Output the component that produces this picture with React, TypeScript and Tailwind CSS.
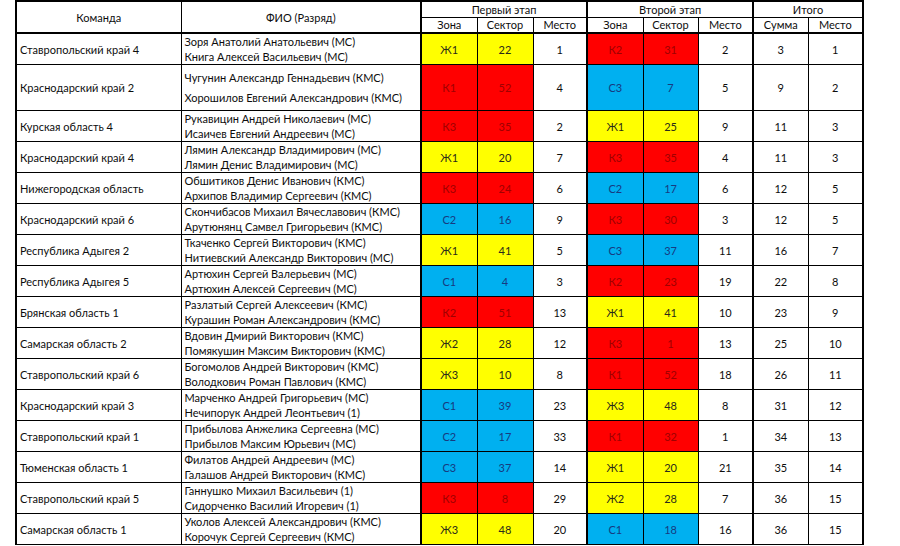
import React from "react";

type Row = {
  team: string;
  n1: string;
  n2: string;
  z1: string;
  s1: string;
  p1: string;
  z2: string;
  s2: string;
  p2: string;
  sum: string;
  place: string;
  tall?: boolean;
};

const rows: Row[] = [
  { team: "Ставропольский край 4", n1: "Зоря Анатолий Анатольевич (МС)", n2: "Книга Алексей Васильевич (МС)", z1: "Ж1", s1: "22", p1: "1", z2: "К2", s2: "31", p2: "2", sum: "3", place: "1" },
  { team: "Краснодарский край 2", n1: "Чугунин Александр Геннадьевич (КМС)", n2: "Хорошилов Евгений Александрович (КМС)", z1: "К1", s1: "52", p1: "4", z2: "С3", s2: "7", p2: "5", sum: "9", place: "2", tall: true },
  { team: "Курская область 4", n1: "Рукавицин Андрей Николаевич (МС)", n2: "Исаичев Евгений Андреевич (МС)", z1: "К3", s1: "35", p1: "2", z2: "Ж1", s2: "25", p2: "9", sum: "11", place: "3" },
  { team: "Краснодарский край 4", n1: "Лямин Александр Владимирович (МС)", n2: "Лямин Денис Владимирович (МС)", z1: "Ж1", s1: "20", p1: "7", z2: "К3", s2: "35", p2: "4", sum: "11", place: "3" },
  { team: "Нижегородская область", n1: "Обшитиков Денис Иванович (КМС)", n2: "Архипов Владимир Сергеевич (КМС)", z1: "К3", s1: "24", p1: "6", z2: "С2", s2: "17", p2: "6", sum: "12", place: "5" },
  { team: "Краснодарский край 6", n1: "Скончибасов Михаил Вячеславович (КМС)", n2: "Арутюнянц Самвел Григорьевич (КМС)", z1: "С2", s1: "16", p1: "9", z2: "К3", s2: "30", p2: "3", sum: "12", place: "5" },
  { team: "Республика Адыгея 2", n1: "Ткаченко Сергей Викторович (КМС)", n2: "Нитиевский Александр Викторович (МС)", z1: "Ж1", s1: "41", p1: "5", z2: "С3", s2: "37", p2: "11", sum: "16", place: "7" },
  { team: "Республика Адыгея 5", n1: "Артюхин Сергей Валерьевич (МС)", n2: "Артюхин Алексей Сергеевич (МС)", z1: "С1", s1: "4", p1: "3", z2: "К2", s2: "23", p2: "19", sum: "22", place: "8" },
  { team: "Брянская область 1", n1: "Разлатый Сергей Алексеевич (КМС)", n2: "Курашин Роман Александрович (КМС)", z1: "К2", s1: "51", p1: "13", z2: "Ж1", s2: "41", p2: "10", sum: "23", place: "9" },
  { team: "Самарская область 2", n1: "Вдовин Дмирий Викторович (КМС)", n2: "Помякушин Максим Викторович (КМС)", z1: "Ж2", s1: "28", p1: "12", z2: "К3", s2: "1", p2: "13", sum: "25", place: "10" },
  { team: "Ставропольский край 6", n1: "Богомолов Андрей Викторович (КМС)", n2: "Володкович Роман Павлович (КМС)", z1: "Ж3", s1: "10", p1: "8", z2: "К1", s2: "52", p2: "18", sum: "26", place: "11" },
  { team: "Краснодарский край 3", n1: "Марченко Андрей Григорьевич (МС)", n2: "Нечипорук Андрей Леонтьевич (1)", z1: "С1", s1: "39", p1: "23", z2: "Ж3", s2: "48", p2: "8", sum: "31", place: "12" },
  { team: "Ставропольский край 1", n1: "Прибылова Анжелика Сергеевна (МС)", n2: "Прибылов Максим Юрьевич (МС)", z1: "С2", s1: "17", p1: "33", z2: "К1", s2: "32", p2: "1", sum: "34", place: "13" },
  { team: "Тюменская область 1", n1: "Филатов Андрей Андреевич (МС)", n2: "Галашов Андрей Викторович (КМС)", z1: "С3", s1: "37", p1: "14", z2: "Ж1", s2: "20", p2: "21", sum: "35", place: "14" },
  { team: "Ставропольский край 5", n1: "Ганнушко Михаил Васильевич (1)", n2: "Сидорченко Василий Игоревич (1)", z1: "К3", s1: "8", p1: "29", z2: "Ж2", s2: "28", p2: "7", sum: "36", place: "15" },
  { team: "Самарская область 1", n1: "Уколов Алексей Александрович (КМС)", n2: "Корочук Сергей Сергеевич (КМС)", z1: "Ж3", s1: "48", p1: "20", z2: "С1", s2: "18", p2: "16", sum: "36", place: "15" },
];

function zoneCls(z: string): string {
  const c = z.charAt(0);
  if (c === "Ж") return "bg-[#ffff00] text-[#2a2a1a]";
  if (c === "К") return "bg-[#ff0000] text-[#a00000]";
  return "bg-[#00b0f0] text-[#173a80]";
}

const td = "border border-black text-center align-middle p-0";
const th = "border border-black text-center align-middle p-0 font-normal leading-[13px]";

export default function App() {
  return (
    <div className="w-[900px] h-[546px] bg-white overflow-hidden pt-0 pl-[15px]">
      <table
        className="border-collapse table-fixed w-[847px] text-[11px] leading-[15px] text-[#0d0d0d]"
        style={{ fontFamily: "Lato, 'Open Sans', sans-serif" }}
      >
        <colgroup>
          <col className="w-[165px]" />
          <col className="w-[240px]" />
          <col className="w-[56px]" />
          <col className="w-[56px]" />
          <col className="w-[54px]" />
          <col className="w-[56px]" />
          <col className="w-[55px]" />
          <col className="w-[55px]" />
          <col className="w-[55px]" />
          <col className="w-[55px]" />
        </colgroup>
        <thead>
          <tr className="h-[16px]">
            <th rowSpan={2} className={`${th} border-t-2 border-l-2 border-b-2`}>Команда</th>
            <th rowSpan={2} className={`${th} border-t-2 border-b-2`}>ФИО (Разряд)</th>
            <th colSpan={3} className={`${th} border-t-2 border-l-2 border-r-2`}>Первый этап</th>
            <th colSpan={3} className={`${th} border-t-2 border-r-2`}>Второй этап</th>
            <th colSpan={2} className={`${th} border-t-2 border-r-2`}>Итого</th>
          </tr>
          <tr className="h-[16px]">
            <th className={`${th} border-l-2 border-b-2`}>Зона</th>
            <th className={`${th} border-b-2`}>Сектор</th>
            <th className={`${th} border-b-2 border-r-2`}>Место</th>
            <th className={`${th} border-b-2`}>Зона</th>
            <th className={`${th} border-b-2`}>Сектор</th>
            <th className={`${th} border-b-2 border-r-2`}>Место</th>
            <th className={`${th} border-b-2`}>Сумма</th>
            <th className={`${th} border-b-2 border-r-2`}>Место</th>
          </tr>
        </thead>
        <tbody>
          {rows.map((r, i) => (
            <tr key={i} className={r.tall ? "h-[46px]" : "h-[31px]"}>
              <td className="border border-black border-l-2 align-middle pl-[3px] whitespace-nowrap">{r.team}</td>
              <td className={`border border-black align-middle pl-[3px] whitespace-nowrap ${r.tall ? "leading-[20px]" : ""}`}>
                <div>{r.n1}</div>
                <div>{r.n2}</div>
              </td>
              <td className={`${td} border-l-2 ${zoneCls(r.z1)}`}>{r.z1}</td>
              <td className={`${td} ${zoneCls(r.z1)}`}>{r.s1}</td>
              <td className={`${td} border-r-2`}>{r.p1}</td>
              <td className={`${td} ${zoneCls(r.z2)}`}>{r.z2}</td>
              <td className={`${td} ${zoneCls(r.z2)}`}>{r.s2}</td>
              <td className={`${td} border-r-2`}>{r.p2}</td>
              <td className={td}>{r.sum}</td>
              <td className={`${td} border-r-2`}>{r.place}</td>
            </tr>
          ))}
        </tbody>
      </table>
    </div>
  );
}
